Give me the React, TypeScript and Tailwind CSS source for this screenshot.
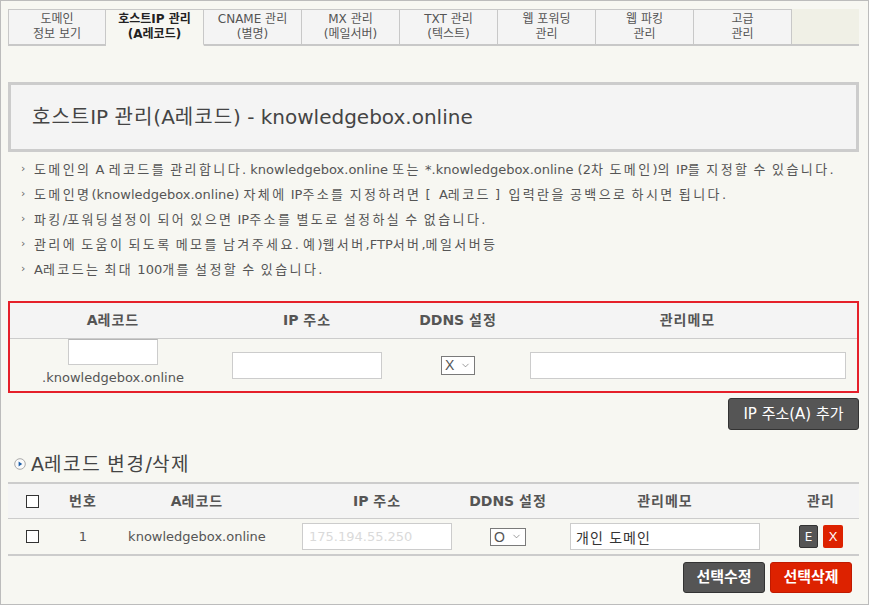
import { ChevronDown } from "lucide-react";

const TABS: [string, string][] = [
  ["도메인", "정보 보기"],
  ["호스트IP 관리", "(A레코드)"],
  ["CNAME 관리", "(별명)"],
  ["MX 관리", "(메일서버)"],
  ["TXT 관리", "(텍스트)"],
  ["웹 포워딩", "관리"],
  ["웹 파킹", "관리"],
  ["고급", "관리"],
];

const NOTES = [
  "도메인의 A 레코드를 관리합니다. knowledgebox.online 또는 *.knowledgebox.online (2차 도메인)의 IP를 지정할 수 있습니다.",
  "도메인명(knowledgebox.online) 자체에 IP주소를 지정하려면 [  A레코드 ]  입력란을 공백으로 하시면 됩니다.",
  "파킹/포워딩설정이 되어 있으면 IP주소를 별도로 설정하실 수 없습니다.",
  "관리에 도움이 되도록 메모를 남겨주세요. 예)웹서버,FTP서버,메일서버등",
  "A레코드는 최대 100개를 설정할 수 있습니다.",
];

function Ko({ text, k }: { text: string; k: string }) {
  const parts = text.split(/([가-힣]+)/);
  return (
    <span className="whitespace-pre">
      {parts.map((p, i) =>
        /[가-힣]/.test(p) ? (
          <span key={i} className={k}>
            {p}
          </span>
        ) : (
          p
        ),
      )}
    </span>
  );
}

function FakeSelect({ label, className }: { label: string; className: string }) {
  return (
    <div
      className={`flex items-center justify-between border border-[#7a7a7a] bg-white pl-[3px] pr-[3px] text-[14px] leading-none text-[#555] ${className}`}
    >
      <span className="font-['Liberation_Sans',sans-serif] font-light">{label}</span>
      <ChevronDown size={11} strokeWidth={1.4} className="text-[#666]" />
    </div>
  );
}

function SectionIcon() {
  return (
    <svg width="12" height="12" viewBox="0 0 12 12">
      <circle cx="6" cy="6" r="5.3" fill="#fafafa" stroke="#a9a9a9" strokeWidth="1" />
      <path d="M4.6 3.4 L8.2 6 L4.6 8.6 Z" fill="#1d5fa8" />
    </svg>
  );
}

const headCell = "flex justify-center whitespace-nowrap";

export default function App() {
  return (
    <div className="h-[605px] w-[869px] overflow-hidden border border-[#bcbcbc] bg-[#f7f7f2] pl-[7px] pr-[9px] font-['DejaVu_Sans','Noto_Sans_CJK_KR',sans-serif] text-[#555]">
      {/* Tabs */}
      <div className="mt-[8px] flex h-[37px]">
        {TABS.map(([a, b], i) => {
          const active = i === 1;
          return (
            <div
              key={a}
              className={`flex w-[98px] flex-col items-center justify-center border-t border-r border-b-2 border-[#c8c8c8] text-[12px] leading-[15px] ${
                i === 0 ? "border-l" : ""
              } ${active ? "border-b-[#f7f7f2] bg-[#f7f7f2] font-bold text-[#222]" : "bg-[#f4f4f4] text-[#555]"}`}
            >
              <span>{a}</span>
              <span>{b}</span>
            </div>
          );
        })}
        <div className="flex-1 border-b-2 border-[#c8c8c8] bg-[#f0f0e6]" />
      </div>

      {/* Title */}
      <div className="mt-[36px] flex h-[70px] items-center border-[3px] border-[#cccccc] bg-[#f4f4f4] pl-[21px] text-[20px] text-[#444]">
        <Ko text="호스트IP 관리(A레코드) - knowledgebox.online" k="tracking-[1px]" />
      </div>

      {/* Notes */}
      <ul className="mt-[5px] pl-[13px] text-[13px] text-[#555]">
        {NOTES.map((n) => (
          <li key={n} className="flex h-[25px] items-center">
            <span className="w-[13px] text-[11px] text-[#666]">›</span>
            <Ko text={n} k="tracking-[2.4px]" />
          </li>
        ))}
      </ul>

      {/* Add form */}
      <div className="mt-[19px] w-[851px] border-2 border-[#e5202a]">
        <div className="grid h-[36px] grid-cols-[206px_182px_120px_1fr] items-center border-b border-[#cccccc] bg-[#f4f4f4] text-[14px] font-bold text-[#555]">
          <div className={headCell}>
            <Ko text="A레코드" k="tracking-[1px]" />
          </div>
          <div className={headCell}>
            <Ko text="IP 주소" k="tracking-[1px]" />
          </div>
          <div className={headCell}>
            <Ko text="DDNS 설정" k="tracking-[1px]" />
          </div>
          <div className={headCell}>
            <Ko text="관리메모" k="tracking-[1px]" />
          </div>
        </div>
        <div className="grid h-[52px] grid-cols-[206px_182px_120px_1fr] items-center">
          <div className="flex h-full flex-col items-center">
            <input
              readOnly
              className="h-[26px] w-[90px] border border-[#cccccc] border-t-[#b5b5b5] bg-white outline-none"
            />
            <div className="mt-[5px] text-[13px] leading-[16px] text-[#555]">.knowledgebox.online</div>
          </div>
          <div className="flex justify-center">
            <input readOnly className="h-[27px] w-[150px] border border-[#cccccc] bg-white outline-none" />
          </div>
          <div className="flex justify-center">
            <FakeSelect label="X" className="h-[19px] w-[34px]" />
          </div>
          <div className="flex justify-end pr-[11px]">
            <input readOnly className="h-[27px] w-[316px] border border-[#cccccc] bg-white outline-none" />
          </div>
        </div>
      </div>

      <div className="mt-[5px] flex justify-end">
        <button className="h-[32px] w-[131px] rounded-[3px] border border-[#333] bg-[#555] text-[15px] text-white">
          IP 주소(A) 추가
        </button>
      </div>

      {/* List */}
      <div className="mt-[22px] flex h-[24px] items-center gap-[5px] pl-[6px] text-[19px] text-[#444]">
        <SectionIcon />
        <Ko text="A레코드 변경/삭제" k="tracking-[1.6px]" />
      </div>

      <div className="mt-[6px] border-t-2 border-[#cccccc]">
        <div className="grid h-[35px] grid-cols-[49px_52px_176px_184px_78px_236px_1fr] items-center border-b border-[#cccccc] bg-[#f4f4f4] text-[14px] font-bold text-[#555]">
          <div className="flex justify-center">
            <input type="checkbox" readOnly className="h-[13px] w-[13px] appearance-none border border-[#333] bg-white" />
          </div>
          <div className={headCell}>
            <Ko text="번호" k="tracking-[1px]" />
          </div>
          <div className={headCell}>
            <Ko text="A레코드" k="tracking-[1px]" />
          </div>
          <div className={headCell}>
            <Ko text="IP 주소" k="tracking-[1px]" />
          </div>
          <div className={headCell}>
            <Ko text="DDNS 설정" k="tracking-[1px]" />
          </div>
          <div className={headCell}>
            <Ko text="관리메모" k="tracking-[1px]" />
          </div>
          <div className={headCell}>
            <Ko text="관리" k="tracking-[1px]" />
          </div>
        </div>
        <div className="grid h-[37px] grid-cols-[49px_52px_176px_184px_78px_236px_1fr] items-center border-b-2 border-[#cccccc] text-[13px] text-[#555]">
          <div className="flex justify-center">
            <input type="checkbox" readOnly className="h-[13px] w-[13px] appearance-none border border-[#333] bg-white" />
          </div>
          <div className="flex justify-center">1</div>
          <div className="flex justify-center whitespace-nowrap">knowledgebox.online</div>
          <div className="flex justify-center">
            <input
              readOnly
              value="175.194.55.250"
              className="h-[27px] w-[150px] border border-[#cccccc] bg-white pl-[6px] text-[13px] text-[#dadada] outline-none"
            />
          </div>
          <div className="flex justify-center">
            <FakeSelect label="O" className="h-[18px] w-[36px]" />
          </div>
          <div className="flex justify-center">
            <input
              readOnly
              value="개인 도메인"
              className="h-[27px] w-[190px] border border-[#cccccc] bg-white pl-[5px] text-[14px] tracking-[1px] text-[#333] outline-none"
            />
          </div>
          <div className="flex justify-center gap-[5px]">
            <button className="h-[23px] w-[19px] rounded-[2px] border border-[#333] bg-[#555] text-[12px] text-white">
              E
            </button>
            <button className="h-[23px] w-[20px] rounded-[2px] bg-[#dd2200] font-['Liberation_Sans',sans-serif] text-[13px] text-white">
              X
            </button>
          </div>
        </div>
      </div>

      <div className="mt-[6px] flex justify-end gap-[5px] pr-[7px]">
        <button className="h-[31px] w-[82px] rounded-[3px] border border-[#333] bg-[#555] text-[15px] font-bold text-white">
          선택수정
        </button>
        <button className="h-[31px] w-[82px] rounded-[3px] border border-[#c01a00] bg-[#dd2200] text-[15px] font-bold text-white">
          선택삭제
        </button>
      </div>
    </div>
  );
}
